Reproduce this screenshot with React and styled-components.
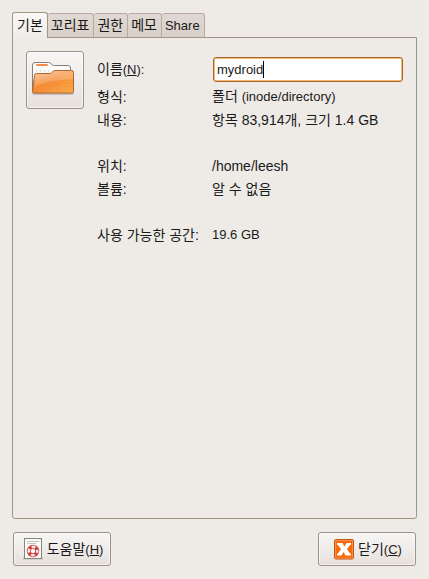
import React, { useState } from "react";
import styled, { createGlobalStyle } from "styled-components";

const GlobalStyle = createGlobalStyle`
  * {
    box-sizing: border-box;
  }

  body {
    margin: 0;
    background: #eeebe7;
    color: #1a1a1a;
    font: 14px/20px "Liberation Sans", "Noto Sans CJK KR", sans-serif;
  }

  button,
  input {
    font: inherit;
    color: inherit;
  }
`;

const Dialog = styled.main`
  display: flex;
  flex-direction: column;
  min-height: 100vh;
  padding: 12px;
`;

const Latin = styled.span`
  font-size: 13px;
`;

const TabList = styled.div`
  display: flex;
  align-items: flex-end;
`;

const Tab = styled.button`
  height: ${(props) => (props.$active ? 26 : 24)}px;
  padding: 0 4px 1px ${(props) => (props.$active ? 4 : 3)}px;
  margin-bottom: ${(props) => (props.$active ? -1 : 0)}px;
  border: 1px solid ${(props) => (props.$active ? "#a39584" : "#b5aa9e")};
  border-left-width: ${(props) => (props.$active ? 1 : 0)}px;
  border-bottom: 0;
  border-radius: 3px 3px 0 0;
  background: ${(props) =>
    props.$active
      ? "linear-gradient(#faf9f8, #eeebe7)"
      : "linear-gradient(#e0d9d3, #d8cfc8)"};
  position: relative;
  white-space: nowrap;
`;

const Panel = styled.section`
  flex: 1;
  display: flex;
  align-items: flex-start;
  gap: 13px;
  padding: 13px;
  border: 1px solid #a39584;
  border-radius: 0 0 3px 3px;
`;

const RaisedButton = styled.button`
  display: flex;
  align-items: center;
  justify-content: center;
  gap: 4px;
  padding: 0;
  border: 1px solid #9c948c;
  border-radius: 3px;
  background: linear-gradient(#f7f6f5, #efecea 50%, #e6e0db);
  box-shadow: inset 0 0 0 1px rgba(255, 255, 255, 0.5);
`;

const IconButton = styled(RaisedButton)`
  flex: none;
  width: 58px;
  height: 58px;
`;

const ActionButton = styled(RaisedButton)`
  min-width: 98px;
  height: 34px;
  padding-left: 2px;
`;

const Details = styled.div`
  flex: 1;
  min-width: 0;
  padding-top: 5px;
`;

const Row = styled.div`
  display: grid;
  grid-template-columns: 103px 1fr;
  column-gap: 12px;
  align-items: center;
  min-height: 23px;
  white-space: nowrap;
`;

const NameRow = styled(Row)`
  margin-bottom: 3px;
`;

const List = styled.dl`
  margin: 0;
`;

const Group = styled.div`
  margin-bottom: 23px;
`;

const Term = styled.dt`
  margin: 0;
`;

const Value = styled.dd`
  margin: 0;
`;

const Field = styled.div`
  position: relative;
  display: flex;
  padding: 1px 0 0 1px;
`;

const NameInput = styled.input`
  flex: 1;
  min-width: 0;
  height: 25px;
  padding: 0 3px;
  border: 1px solid #a8672c;
  border-radius: 3px;
  outline: none;
  background: #fff;
  box-shadow: inset 0 0 0 1px #f3b878;
  font-size: 13px;
`;

const Caret = styled.span`
  position: absolute;
  top: 5px;
  left: 51px;
  width: 1px;
  height: 17px;
  background: #000;
  pointer-events: none;
`;

const Actions = styled.footer`
  display: flex;
  justify-content: space-between;
  padding: 13px 1px 1px;
`;

const Mnemonic = ({ letter, children }) => (
  <Latin>
    (<u>{letter}</u>){children}
  </Latin>
);

const FolderIcon = () => (
  <svg width="48" height="40" viewBox="0 0 48 40" aria-hidden="true">
    <defs>
      <linearGradient id="folder" x1="0" y1="0" x2="1" y2="1">
        <stop offset="0" stopColor="#f8b27a" />
        <stop offset="0.45" stopColor="#f58a35" />
        <stop offset="1" stopColor="#f9ad49" />
      </linearGradient>
      <linearGradient id="shine" x1="0" y1="0" x2="0" y2="1">
        <stop offset="0" stopColor="#fff" stopOpacity="0.35" />
        <stop offset="1" stopColor="#fff" stopOpacity="0.1" />
      </linearGradient>
    </defs>
    <rect x="1" y="31" width="42" height="4" rx="2" fill="#8d8178" opacity="0.4" />
    <path
      d="M1.5 31V5q0-2.500 2.500-2.500h13.500q1.500 0 2.500 1.200l1.500 1.300q1 .5 2 .5H37q2.500 0 2.500 2.500V31z"
      fill="#fbfaf9"
      stroke="#85807b"
    />
    <rect x="5" y="4" width="12" height="2" rx="1" fill="#f58f48" />
    <path d="M5 11h17" stroke="#c9c6c2" strokeDasharray="1 3" />
    <path
      d="M3 33q-1.500 0-1.500-1.500L3.500 15.500q0-2 2-2H19q1.500 0 2.500-1.500t2.500-1.500h16.500q2 0 2 2V31q0 2-2 2z"
      fill="url(#folder)"
      stroke="#b0662c"
    />
    <path d="M3.500 26L4 16q0-2 2-2h13.500l4-3H40q2 0 2 2v6Q22 20 3.500 26z" fill="url(#shine)" />
    <path
      d="M22 23.500h18M18 26.500h22M14 29.500h26"
      stroke="#e87a25"
      strokeDasharray="1 3"
      opacity="0.5"
    />
  </svg>
);

const HelpIcon = () => (
  <svg width="20" height="22" viewBox="0 0 20 22" aria-hidden="true">
    <path d="M0 20.500h20" stroke="#c4beb8" strokeWidth="2" />
    <rect x="1.500" y="0.500" width="17" height="20" fill="#fafafa" stroke="#85857f" />
    <path d="M4 3.500h12M4 5.500h9" stroke="#c2c5bf" />
    <circle cx="10" cy="13" r="4.200" fill="none" stroke="#d0413d" strokeWidth="4" />
    <circle
      cx="10"
      cy="13"
      r="4.200"
      fill="none"
      stroke="#f5eeee"
      strokeWidth="2.400"
      strokeDasharray="3.800 2.800"
      strokeDashoffset="1.900"
    />
  </svg>
);

const CloseIcon = () => (
  <svg width="20" height="21" viewBox="0 0 20 21" aria-hidden="true">
    <rect x="0.500" y="0.500" width="19" height="19.500" rx="1.500" fill="#f8690c" stroke="#c2551c" />
    <rect x="1.500" y="1.500" width="17" height="17.500" fill="none" stroke="#fb8f45" />
    <path
      d="M3 4h5.500L10.500 7.500 12.500 4H17v2h-1L13 10.200l3 4.300h1v2h-5.500L9.500 13l-2 3.500H3v-2h1l3-4.300L4 6H3z"
      fill="#fff"
    />
  </svg>
);

const tabs = ["기본", "꼬리표", "권한", "메모", "Share"];

const groups = [
  [
    { term: "형식:", value: "폴더 ", detail: "(inode/directory)" },
    { term: "내용:", value: "항목 83,914개, 크기 1.4 GB" },
  ],
  [
    { term: "위치:", value: "/home/leesh" },
    { term: "볼륨:", value: "알 수 없음" },
  ],
  [{ term: "사용 가능한 공간:", detail: "19.6 GB" }],
];

const App = () => {
  const [active, setActive] = useState("기본");
  const [name, setName] = useState("mydroid");
  const [touched, setTouched] = useState(false);

  return (
    <Dialog>
      <GlobalStyle />
      <TabList role="tablist">
        {tabs.map((tab) => (
          <Tab
            key={tab}
            role="tab"
            aria-selected={tab === active}
            $active={tab === active}
            onClick={() => setActive(tab)}
          >
            {tab === "Share" ? <Latin>{tab}</Latin> : tab}
          </Tab>
        ))}
      </TabList>
      <Panel role="tabpanel">
        <IconButton aria-label="폴더">
          <FolderIcon />
        </IconButton>
        <Details>
          <NameRow>
            <label htmlFor="name">
              이름<Mnemonic letter="N">:</Mnemonic>
            </label>
            <Field>
              <NameInput
                id="name"
                value={name}
                onFocus={() => setTouched(true)}
                onChange={(e) => setName(e.target.value)}
              />
              {!touched && <Caret />}
            </Field>
          </NameRow>
          <List>
            {groups.map((rows) => (
              <Group key={rows[0].term}>
                {rows.map(({ term, value, detail }) => (
                  <Row key={term}>
                    <Term>{term}</Term>
                    <Value>
                      {value}
                      {detail && <Latin>{detail}</Latin>}
                    </Value>
                  </Row>
                ))}
              </Group>
            ))}
          </List>
        </Details>
      </Panel>
      <Actions>
        <ActionButton>
          <HelpIcon />
          <span>
            도움말<Mnemonic letter="H" />
          </span>
        </ActionButton>
        <ActionButton>
          <CloseIcon />
          <span>
            닫기<Mnemonic letter="C" />
          </span>
        </ActionButton>
      </Actions>
    </Dialog>
  );
};

export default App;
